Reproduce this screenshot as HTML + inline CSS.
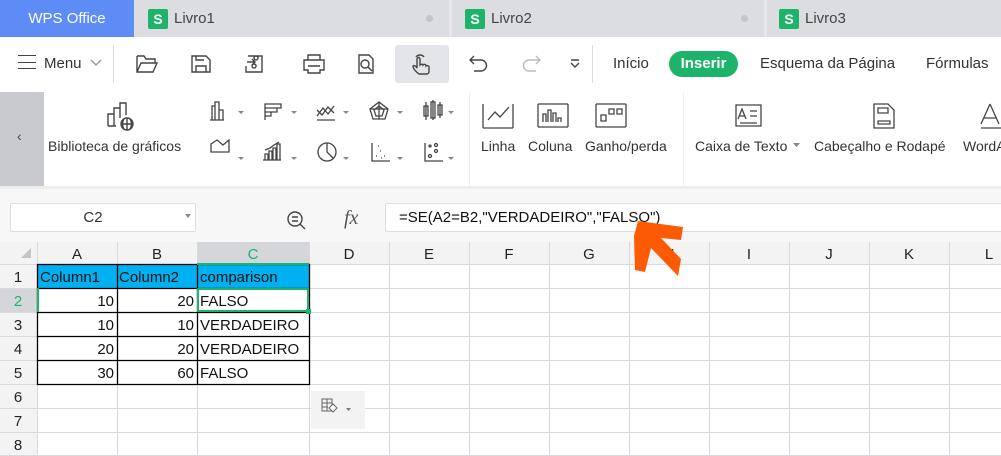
<!DOCTYPE html>
<html><head><meta charset="utf-8"><style>
*{margin:0;padding:0;box-sizing:border-box}
body{width:1001px;height:456px;overflow:hidden;background:#fff;font-family:"Liberation Sans",sans-serif;position:relative;color:#333}
.abs{position:absolute}
.tabbar{left:0;top:0;width:1001px;height:37px;background:#dcdde1}
.tab{top:0;height:37px;font-size:15px;color:#444;display:flex;align-items:center}
.sicon{width:20px;height:20px;background:#1eb36a;color:#fff;font-weight:bold;font-size:14px;display:flex;align-items:center;justify-content:center;border-radius:2px;margin-right:6px}
.dot{width:7px;height:7px;border-radius:50%;background:#c3c5cc}
.ic{stroke:#444;fill:none;stroke-width:1.4}
.lbl{font-size:14px;color:#333}
.grid{left:0;top:242px}
</style></head><body>
<div class="abs tabbar"></div>
<div class="abs tab" style="left:0;width:134px;background:#5e8cf7;color:#fff;justify-content:center;font-size:15px">WPS Office</div>
<div class="abs tab" style="left:148px"><div class="sicon">S</div>Livro1</div>
<div class="abs dot" style="left:426px;top:15px"></div>
<div class="abs" style="left:449px;top:0;width:3px;height:37px;background:#e6e7ea"></div>
<div class="abs tab" style="left:465px"><div class="sicon">S</div>Livro2</div>
<div class="abs dot" style="left:741px;top:15px"></div>
<div class="abs" style="left:764px;top:0;width:3px;height:37px;background:#e6e7ea"></div>
<div class="abs tab" style="left:779px"><div class="sicon">S</div>Livro3</div>

<div class="abs" style="left:18px;top:55px;width:18px;height:14px;border-top:1.5px solid #444;border-bottom:1.5px solid #444"></div>
<div class="abs" style="left:18px;top:61.5px;width:18px;height:1.5px;background:#444"></div>
<div class="abs" style="left:44px;top:55px;font-size:15px;color:#333">Menu</div>
<svg class="abs" style="left:89px;top:58px" width="14" height="10"><path d="M2 2l5 5 5-5" fill="none" style="stroke:#999;stroke-width:1.4"/></svg>
<div class="abs" style="left:113px;top:45px;width:1px;height:38px;background:#ddd"></div>
<div class="abs" style="left:395px;top:45px;width:54px;height:38px;background:#e4e5e8;border-radius:3px"></div>
<svg class="abs" style="left:130px;top:50px" width="460" height="30">
<path class="ic" d="M7 6h7l2 3h9v4M7 6v16h16l4-9H11l-4 9"/>
<path class="ic" d="M62 6h14l4 4v12H62z M66 22v-6h10v6 M66 6v4h8"/>
<path class="ic" d="M118 6h14v16h-16v-6 M117 12h7m-2-3l3 3-3 3 M126 10a2 2 0 1 1 0.1 0M124 18a2 2 0 1 1 0.1 0"/>
<path class="ic" d="M174 10h20v10h-4v3h-12v-3h-4z M178 10V5h12v5 M178 16h12"/>
<path class="ic" d="M229 5h10l4 4v14h-14z M235 14m-4 0a4 4 0 1 0 8 0a4 4 0 1 0-8 0 M238 17l4 4"/>
<path class="ic" d="M289 24c-4-3-6-6-6-8 1-1 3 0 4 2v-9a1.5 1.5 0 0 1 3 0v6c1-1 3-1 3 0 1-1 3-1 3 1 1-1 3 0 3 1v4c0 2-1 3-2 3z M286 7a5 5 0 0 1 8 0"/>
<path class="ic" d="M341 10h10a5 5 0 0 1 0 11h-7 M344 6l-4 4 4 4"/>
<path fill="none" style="stroke:#bbb;stroke-width:1.4" d="M409 10h-10a5 5 0 0 0 0 11h7 M406 6l4 4-4 4"/>
<path class="ic" d="M441 10h8 M441 13l4 4 4-4"/>
</svg>
<div class="abs" style="left:592px;top:45px;width:1px;height:38px;background:#ddd"></div>
<div class="abs" style="left:613px;top:55px;font-size:15px">Início</div>
<div class="abs" style="left:669px;top:51px;width:69px;height:26px;border-radius:13px;background:#1eb36a;color:#fff;font-weight:bold;font-size:15px;text-align:center;line-height:26px">Inserir</div>
<div class="abs" style="left:760px;top:55px;font-size:15px">Esquema da Página</div>
<div class="abs" style="left:926px;top:55px;font-size:15px">Fórmulas</div>

<div class="abs" style="left:0;top:92px;width:44px;height:94px;background:#c9cacf"></div>
<div class="abs" style="left:17px;top:128px;font-size:14px;color:#444">‹</div>
<svg class="abs" style="left:100px;top:100px" width="40" height="32"><path class="ic" d="M8 26V14h6v12 M14 26V8h6v10 M20 12V3h6v12 M8 26h8"/><circle class="ic" cx="27" cy="24" r="6"/><path class="ic" d="M21 24h12M27 18v12M24 19c-2 3-2 7 0 10M30 19c2 3 2 7 0 10"/></svg>
<div class="abs lbl" style="left:48px;top:138px">Biblioteca de gráficos</div>
<svg class="abs" style="left:205px;top:98px" width="265" height="70" stroke="#444" fill="none" stroke-width="1.3">
<path d="M7 22V8h3v14M10 22V4h4v18M14 22V12h4v10M5 22h14"/><path d="M33 13l3 3 3-3" fill="#888" stroke="none"/>
<path d="M60 6h16v4H60zM60 10h12v4H60zM60 14h6v4h-6M60 6v16"/><path d="M86 13l3 3 3-3" fill="#888" stroke="none"/>
<path d="M112 18l6-8 5 6 6-8M112 12l5 5 6-8 6 6M112 22h18"/><path d="M138 13l3 3 3-3" fill="#888" stroke="none"/>
<path d="M174 4l9 7-3 10h-12l-3-10zM174 8l5 4-2 6h-6l-2-6zM174 4v17M165 11l18 0"/><path d="M192 13l3 3 3-3" fill="#888" stroke="none"/>
<path d="M219 8h4v10h-4zM226 4h4v16h-4zM233 7h4v10h-4zM221 4v18M228 2v20M235 4v16"/><path d="M243 13l3 3 3-3" fill="#888" stroke="none"/>
<path d="M6 46l6-4 6 5 6-5v12H6zM6 46v8"/><path d="M33 59l3 3 3-3" fill="#888" stroke="none"/>
<path d="M60 62v-6h3v6M64 62v-9h3v9M68 62v-12h3v12M72 62V46h3v16M58 62h18M60 52l5-2 4-3 5-3"/><path d="M86 59l3 3 3-3" fill="#888" stroke="none"/>
<circle cx="122" cy="54" r="9"/><path d="M122 45v9l6 6"/><path d="M138 59l3 3 3-3" fill="#888" stroke="none"/>
<path d="M167 45v18h18M171 58h1M175 53h1M179 58h1M176 60h1M173 48h1"/><path d="M192 59l3 3 3-3" fill="#888" stroke="none"/>
<path d="M220 45v18h18"/><circle cx="225" cy="58" r="1.5"/><circle cx="231" cy="53" r="1.5"/><circle cx="225" cy="48" r="1"/><circle cx="231" cy="47" r="1.5"/><path d="M243 59l3 3 3-3" fill="#888" stroke="none"/>
</svg>
<div class="abs" style="left:469px;top:92px;width:1px;height:94px;background:#eee"></div>
<svg class="abs" style="left:480px;top:100px" width="190" height="32" stroke="#444" fill="none" stroke-width="1.3">
<path d="M3 4v24M3 28h30M33 4v24M8 20l7-8 5 5 9-10"/>
<path d="M58 4h30M58 27h30M58 4v23M88 4v23M63 22v-8h3v8M68 22V10h3v12M73 22v-9h3v9M78 22v-4h3v4"/>
<path d="M116 4h30M116 27h30M116 4v23M146 4v23M121 15h5v6h-5zM129 9h5v5h-5zM137 9h5v5h-5z"/>
</svg>
<div class="abs lbl" style="left:481px;top:138px">Linha</div>
<div class="abs lbl" style="left:528px;top:138px">Coluna</div>
<div class="abs lbl" style="left:585px;top:138px">Ganho/perda</div>
<div class="abs" style="left:683px;top:92px;width:1px;height:94px;background:#eee"></div>
<svg class="abs" style="left:730px;top:100px" width="271" height="32" stroke="#444" fill="none" stroke-width="1.3">
<path d="M6 5h25v21H6z M8 19l4-10 4 10M9 16h6M20 11h7M20 16h7M10 23h17"/>
<path d="M144 4h14l6 6v18h-20z M148 8h10v5h-10z M148 21h12v3h-12z"/>
<path d="M260 4l-9 20M260 4l9 20M254 18h12M251 28h20"/>
</svg>
<div class="abs lbl" style="left:695px;top:138px">Caixa de Texto</div>
<svg class="abs" style="left:793px;top:143px" width="8" height="5"><path d="M0 0h7l-3.5 4z" fill="#888"/></svg>
<div class="abs lbl" style="left:814px;top:138px">Cabeçalho e Rodapé</div>
<div class="abs lbl" style="left:963px;top:138px">WordArt</div>

<div class="abs" style="left:0;top:186px;width:1001px;height:56px;background:#f7f7f8;border-top:3px solid #eeeef0"></div>
<div class="abs" style="left:10px;top:203px;width:186px;height:29px;background:#fff;border:1px solid #ddd;border-radius:2px;font-size:15px;text-align:center;line-height:27px;padding-right:20px">C2</div>
<svg class="abs" style="left:185px;top:214px" width="8" height="5"><path d="M0 0h6l-3 4z" fill="#888"/></svg>
<svg class="abs" style="left:285px;top:209px" width="24" height="24"><circle cx="10" cy="10" r="7" class="ic"/><path class="ic" d="M15 15l5 5M7 8h6M7 12h6"/></svg>
<div class="abs" style="left:344px;top:207px;font-family:'Liberation Serif',serif;font-style:italic;font-size:20px;color:#555">fx</div>
<div class="abs" style="left:385px;top:203px;width:630px;height:29px;background:#fff;border:1px solid #ddd;border-radius:2px;font-size:15px;line-height:27px;padding-left:13px;color:#111">=SE(A2=B2,"VERDADEIRO","FALSO")</div>

<svg class="abs grid" width="1001" height="214" font-family="Liberation Sans" font-size="15">
<rect x="0" y="0" width="1001" height="22" fill="#f3f3f4"/>
<rect x="0" y="0" width="37" height="214" fill="#f3f3f4"/>
<rect x="197" y="0" width="112" height="22" fill="#d5d6da"/>
<rect x="0" y="46" width="37" height="24" fill="#d5d6da"/>
<path d="M31 6v10H21z" fill="#c4c4c8"/>
<g stroke="#d8d9de" stroke-width="1">
<path d="M37.5 0v214M117.5 0v214M197.5 0v214M309.5 0v214M389.5 0v214M469.5 0v214M549.5 0v214M629.5 0v214M709.5 0v214M789.5 0v214M869.5 0v214M949.5 0v214"/>
<path d="M0 22.5h1001M0 46.5h1001M0 70.5h1001M0 94.5h1001M0 118.5h1001M0 142.5h1001M0 166.5h1001M0 190.5h1001M0 213.5h1001"/>
</g>
<rect x="37" y="22" width="272" height="24" fill="#00b0f0"/>
<g stroke="#000" stroke-width="1.3" fill="none"><path d="M37.5 22.5h272v120h-272zM117.5 22.5v120M197.5 22.5v120M37.5 46.5h272M37.5 70.5h272M37.5 94.5h272M37.5 118.5h272"/></g>
<rect x="197" y="21" width="112" height="2" fill="#1eb36a"/>
<rect x="37" y="46" width="2" height="24" fill="#1eb36a"/>
<rect x="198" y="47" width="110" height="22" fill="#fff" stroke="#1eb36a" stroke-width="2"/>
<rect x="306" y="67" width="5" height="5" fill="#1eb36a"/>
<g text-anchor="middle" fill="#222">
<text x="77" y="17">A</text><text x="157" y="17">B</text><text x="253" y="17" fill="#1eb36a">C</text><text x="349" y="17">D</text><text x="429" y="17">E</text><text x="509" y="17">F</text><text x="589" y="17">G</text><text x="669" y="17">H</text><text x="749" y="17">I</text><text x="829" y="17">J</text><text x="909" y="17">K</text><text x="989" y="17">L</text>
<text x="18" y="40">1</text><text x="18" y="64" fill="#1eb36a">2</text><text x="18" y="88">3</text><text x="18" y="112">4</text><text x="18" y="136">5</text><text x="18" y="160">6</text><text x="18" y="184">7</text><text x="18" y="208">8</text>
</g>
<g fill="#111">
<text x="40" y="40">Column1</text><text x="119" y="40">Column2</text><text x="200" y="40">comparison</text>
<g text-anchor="end"><text x="114" y="64">10</text><text x="194" y="64">20</text><text x="114" y="88">10</text><text x="194" y="88">10</text><text x="114" y="112">20</text><text x="194" y="112">20</text><text x="114" y="136">30</text><text x="194" y="136">60</text></g>
<text x="200" y="64">FALSO</text><text x="200" y="88">VERDADEIRO</text><text x="200" y="112">VERDADEIRO</text><text x="200" y="136">FALSO</text>
</g>
<rect x="311" y="149" width="54" height="38" fill="#f3f3f4"/>
<path d="M322 157h10v12h-10zM322 161h10M322 165h6M327 157v12" stroke="#666" fill="none"/>
<path d="M333 162l4 4-4 4-4-4z" stroke="#666" fill="#fff"/>
<path d="M346 166h5l-2.5 3z" fill="#777"/>
</svg>
<svg class="abs" style="left:0;top:0" width="1001" height="456"><path d="M638 221L683 227L681 240L661 238L681 259L678 276L651 248L645 272L635 270L634 236Z" fill="#fc5a05"/></svg>
</body></html>
